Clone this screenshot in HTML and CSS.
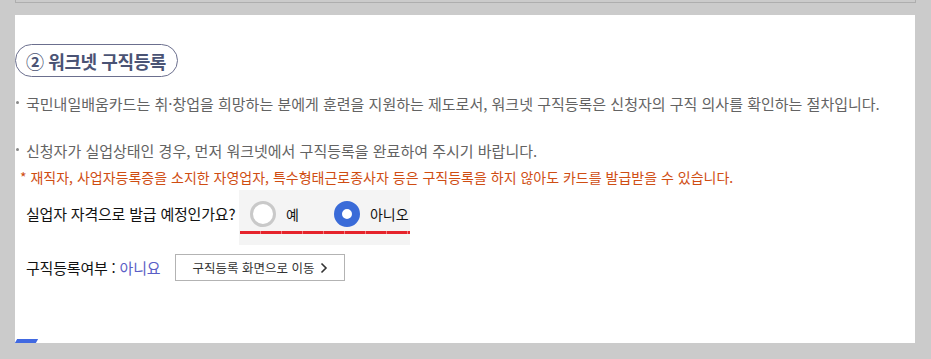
FILE: index.html
```html
<!DOCTYPE html>
<html lang="ko">
<head>
<meta charset="utf-8">
<link rel="stylesheet" href="styles.css">
</head>
<body>
<div class="topbox"></div>
<div class="panel">
  <div class="pill">② 워크넷 구직등록</div>
  <ul class="list">
    <li class="item first"><span class="dot"></span><span>국민내일배움카드는 취·창업을 희망하는 분에게 훈련을 지원하는 제도로서, 워크넷 구직등록은 신청자의 구직 의사를 확인하는 절차입니다.</span></li>
    <li class="item second"><span class="dot"></span><span>신청자가 실업상태인 경우, 먼저 워크넷에서 구직등록을 완료하여 주시기 바랍니다.</span></li>
  </ul>
  <p class="note">* 재직자, 사업자등록증을 소지한 자영업자, 특수형태근로종사자 등은 구직등록을 하지 않아도 카드를 발급받을 수 있습니다.</p>
  <div class="question">
    <span class="qlabel">실업자 자격으로 발급 예정인가요?</span>
    <div class="choices">
      <div class="opts">
        <span class="radio"></span><span class="optlabel yes">예</span>
        <span class="radio on"></span><span class="optlabel">아니오</span>
      </div>
      <div class="redline"></div>
    </div>
  </div>
  <div class="status">
    <span class="slabel">구직등록여부 : <span class="sval">아니요</span></span>
    <button class="move">구직등록 화면으로 이동 <svg width="8" height="12" viewBox="0 0 8 12"><path d="M1.5 1.5 L6 6 L1.5 10.5" fill="none" stroke="#333" stroke-width="1.6"/></svg></button>
  </div>
  <span class="corner"></span>
</div>
</body>
</html>
```

FILE: styles.css
```css
* { box-sizing: border-box; }
html, body { margin: 0; padding: 0; }
body {
  background: #cbcbcb;
  width: 931px;
  height: 359px;
  overflow: hidden;
  font-family: "Noto Sans CJK KR", "Noto Sans", sans-serif;
}
.topbox {
  margin: 0 15px;
  height: 3px;
  border: 1px solid #aeaeae;
  border-top: none;
  background: #cbcbcb;
}
.panel {
  position: relative;
  margin: 12px 16px 0 15px;
  height: 328px;
  background: #fff;
  padding-top: 29px;
}
.pill {
  display: inline-flex;
  align-items: center;
  height: 33px;
  padding: 0 11px 0 10px;
  border: 1px solid #6b6f8e;
  border-radius: 17px;
  font-size: 18px;
  font-weight: 700;
  color: #4a5374;
  letter-spacing: -0.4px;
}
.list {
  list-style: none;
  margin: 0;
  padding: 0;
}
.item {
  display: flex;
  font-size: 15px;
  line-height: 20px;
  color: #636363;
}
.item.first { margin-top: 17px; }
.item.second { margin-top: 27px; }
.dot {
  flex: 0 0 11px;
  position: relative;
}
.dot::before {
  content: "";
  position: absolute;
  left: 1px;
  top: 7px;
  width: 3px;
  height: 3px;
  border-radius: 50%;
  background: #888;
}
.note {
  margin: 6px 0 0 5px;
  font-size: 14px;
  line-height: 20px;
  color: #cf4d12;
}
.question {
  display: flex;
  align-items: flex-start;
  margin-top: 3px;
}
.qlabel {
  margin-left: 11px;
  margin-top: 14px;
  font-size: 15px;
  line-height: 20px;
  color: #111;
  width: 213px;
  white-space: nowrap;
  letter-spacing: -0.2px;
}
.choices {
  width: 171px;
  height: 55px;
  background: #f4f4f4;
  padding-top: 11px;
}
.opts {
  display: flex;
  align-items: center;
  height: 26px;
  padding-left: 11px;
}
.radio {
  width: 26px;
  height: 26px;
  border-radius: 50%;
  border: 3px solid #c9c9c9;
  background: #fff;
}
.radio.on {
  border: 8.5px solid #3a6bd8;
  background: #fff;
}
.optlabel {
  margin-left: 10px;
  font-size: 14px;
  color: #111;
}
.optlabel.yes { margin-right: 35px; }
.redline {
  margin: 4px 0 0 1px;
  height: 3px;
  background: repeating-linear-gradient(to right, #e5232b 0 20px, #f47a7e 20px 21px);
}
.status {
  display: flex;
  align-items: center;
  margin-top: 9px;
  margin-left: 11px;
}
.slabel {
  font-size: 15px;
  color: #111;
  width: 149px;
  white-space: nowrap;
  letter-spacing: -0.2px;
}
.sval { color: #5a5ec6; }
.move {
  width: 170px;
  height: 27px;
  border: 1px solid #b3b3b3;
  background: #fff;
  font-family: "Noto Sans CJK KR", sans-serif;
  font-size: 12.5px;
  color: #333;
  display: flex;
  align-items: center;
  justify-content: center;
  gap: 5px;
  padding: 0;
}
.corner {
  position: absolute;
  left: 1px;
  bottom: 0;
  width: 21px;
  height: 4px;
  background: #4169e1;
  transform: skewX(-30deg);
}
```
